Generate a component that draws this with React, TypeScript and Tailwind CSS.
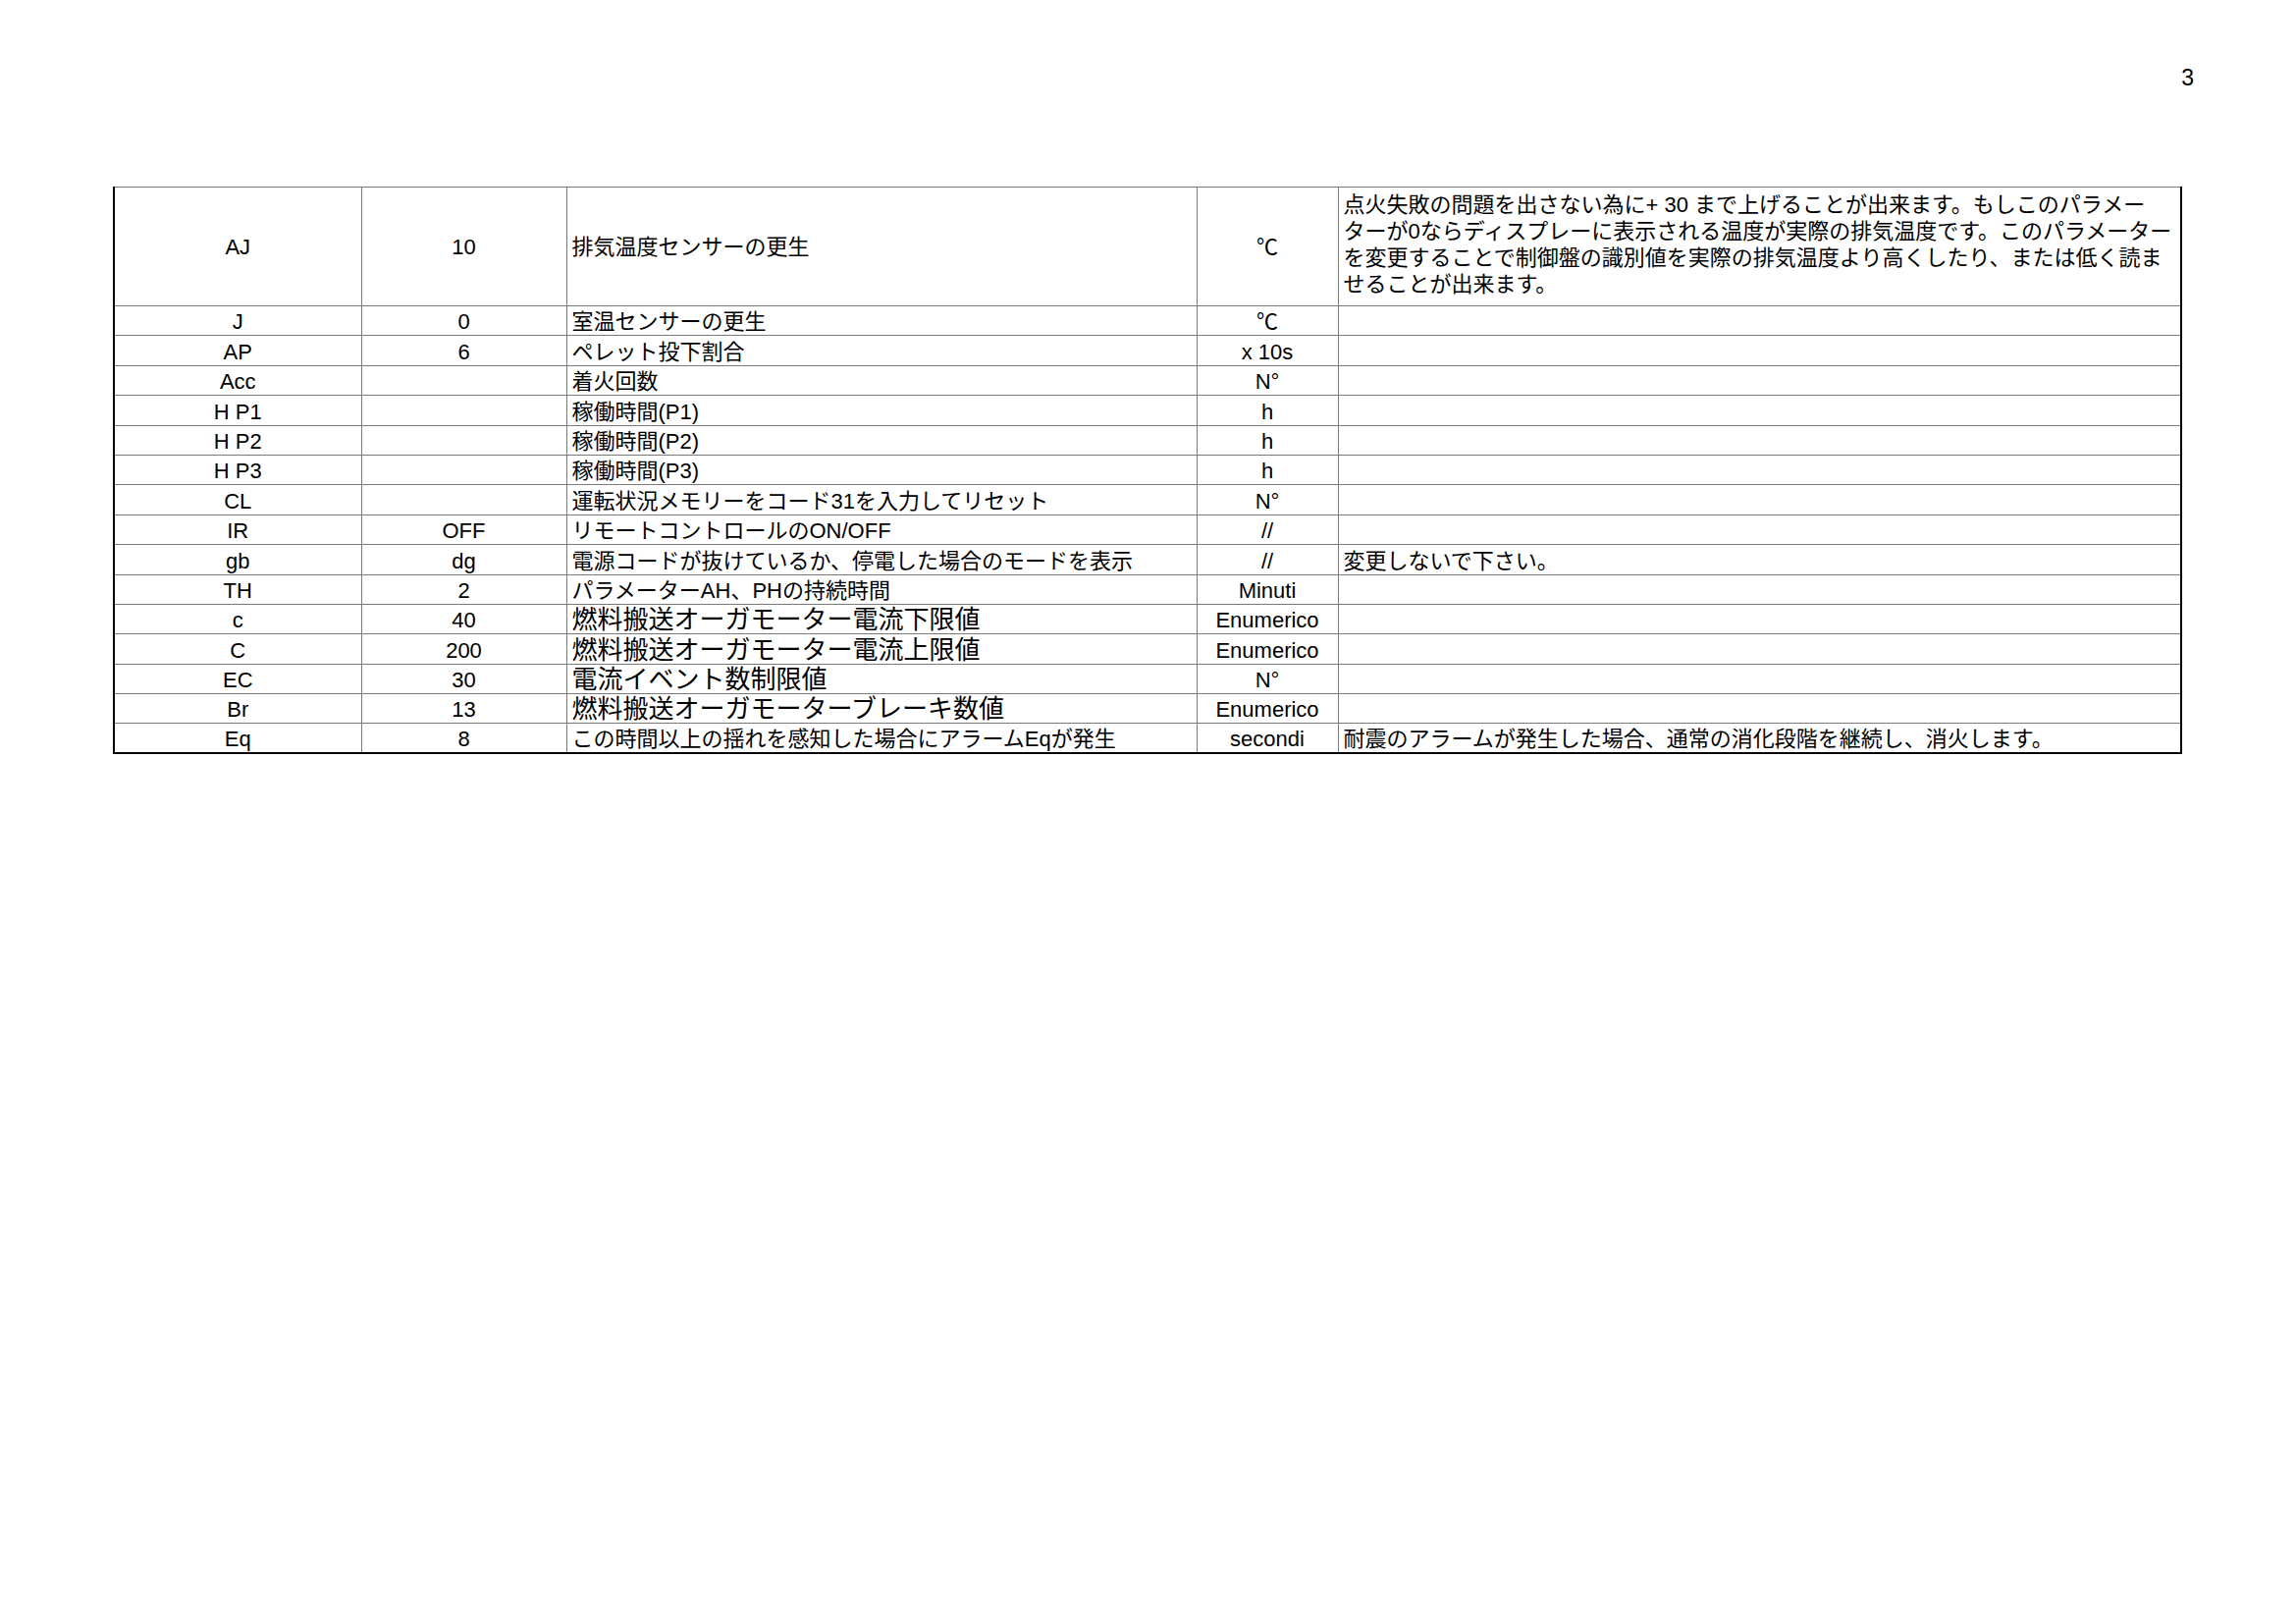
import React from 'react';

type Row = {
  code: string;
  value: string;
  label: string;
  unit: string;
  note?: string;
  big?: boolean;
};

const rows: Row[] = [
  { code: 'J', value: '0', label: '室温センサーの更生', unit: '℃' },
  { code: 'AP', value: '6', label: 'ペレット投下割合', unit: 'x 10s' },
  { code: 'Acc', value: '', label: '着火回数', unit: 'N°' },
  { code: 'H P1', value: '', label: '稼働時間(P1)', unit: 'h' },
  { code: 'H P2', value: '', label: '稼働時間(P2)', unit: 'h' },
  { code: 'H P3', value: '', label: '稼働時間(P3)', unit: 'h' },
  { code: 'CL', value: '', label: '運転状況メモリーをコード31を入力してリセット', unit: 'N°' },
  { code: 'IR', value: 'OFF', label: 'リモートコントロールのON/OFF', unit: '//' },
  { code: 'gb', value: 'dg', label: '電源コードが抜けているか、停電した場合のモードを表示', unit: '//', note: '変更しないで下さい。' },
  { code: 'TH', value: '2', label: 'パラメーターAH、PHの持続時間', unit: 'Minuti' },
  { code: 'c', value: '40', label: '燃料搬送オーガモーター電流下限値', unit: 'Enumerico', big: true },
  { code: 'C', value: '200', label: '燃料搬送オーガモーター電流上限値', unit: 'Enumerico', big: true },
  { code: 'EC', value: '30', label: '電流イベント数制限値', unit: 'N°', big: true },
  { code: 'Br', value: '13', label: '燃料搬送オーガモーターブレーキ数値', unit: 'Enumerico', big: true },
  { code: 'Eq', value: '8', label: 'この時間以上の揺れを感知した場合にアラームEqが発生', unit: 'secondi', note: '耐震のアラームが発生した場合、通常の消化段階を継続し、消火します。' },
];

const note = [
  '点火失敗の問題を出さない為に+ 30 まで上げることが出来ます。もしこのパラメー',
  'ターが0ならディスプレーに表示される温度が実際の排気温度です。このパラメーター',
  'を変更することで制御盤の識別値を実際の排気温度より高くしたり、または低く読ま',
  'せることが出来ます。',
];

const cell = 'border border-[#7a7a7a] p-0';

export default function App() {
  return (
    <div
      className="min-h-[1654px] w-[2339px] bg-white text-black"
      style={{ fontFamily: '"Liberation Sans", "Noto Sans CJK JP", sans-serif' }}
    >
      <div className="flex justify-end pt-[64px] pr-[104px] text-[23px] leading-[30px]">3</div>
      <div className="pt-[96px] pl-[115px]">
        <table className="w-[2106px] table-fixed border-collapse border-x-2 border-b-2 border-t-0 border-black text-[22px]">
          <colgroup>
            <col className="w-[252px]" />
            <col className="w-[209px]" />
            <col className="w-[642px]" />
            <col className="w-[144px]" />
            <col className="w-[859px]" />
          </colgroup>
          <tbody>
            <tr className="h-[121px]">
              <td className={`${cell} text-center align-middle`}>AJ</td>
              <td className={`${cell} text-center align-middle`}>10</td>
              <td className={`${cell} px-[5px] align-middle`}>排気温度センサーの更生</td>
              <td className={`${cell} text-center align-middle`}>℃</td>
              <td className={`${cell} px-[5px] pt-[4px] align-top leading-[27px]`}>
                {note.map(line => (
                  <div key={line} className="whitespace-nowrap">{line}</div>
                ))}
              </td>
            </tr>
            {rows.map(r => (
              <tr key={r.code} className="h-[30.4px] leading-[26px]">
                <td className={`${cell} text-center align-bottom`}>{r.code}</td>
                <td className={`${cell} text-center align-bottom`}>{r.value}</td>
                <td className={`${cell} px-[5px] align-bottom whitespace-nowrap ${r.big ? 'text-[26px] leading-[27px]' : ''}`}>
                  {r.label}
                </td>
                <td className={`${cell} text-center align-bottom`}>{r.unit}</td>
                <td className={`${cell} px-[5px] align-bottom whitespace-nowrap`}>{r.note ?? ''}</td>
              </tr>
            ))}
          </tbody>
        </table>
      </div>
    </div>
  );
}
